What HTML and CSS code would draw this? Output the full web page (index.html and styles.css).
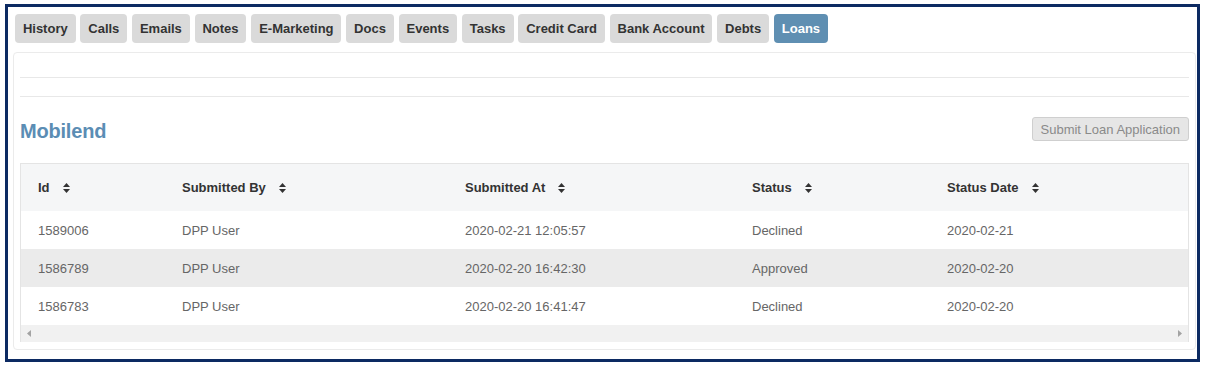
FILE: index.html
```html
<!DOCTYPE html>
<html>
<head>
<meta charset="utf-8">
<link rel="stylesheet" href="styles.css">
</head>
<body>
<div class="frame">
  <nav class="tabs">
    <span class="tab">History</span>
    <span class="tab">Calls</span>
    <span class="tab">Emails</span>
    <span class="tab">Notes</span>
    <span class="tab">E-Marketing</span>
    <span class="tab">Docs</span>
    <span class="tab">Events</span>
    <span class="tab">Tasks</span>
    <span class="tab">Credit Card</span>
    <span class="tab">Bank Account</span>
    <span class="tab">Debts</span>
    <span class="tab active">Loans</span>
  </nav>
  <div class="panel">
    <div class="rule rule-a"></div>
    <div class="rule rule-b"></div>
    <div class="head-row">
      <h2 class="title">Mobilend</h2>
      <button class="submit">Submit Loan Application</button>
    </div>
    <div class="table-wrap">
      <table class="grid">
        <colgroup>
          <col class="c1"><col class="c2"><col class="c3"><col class="c4"><col class="c5">
        </colgroup>
        <thead>
          <tr>
            <th>Id<svg class="sort" viewBox="0 0 7 10"><path d="M3.5 0 L7 4 L0 4 Z M0 6 L7 6 L3.5 10 Z"/></svg></th>
            <th>Submitted By<svg class="sort" viewBox="0 0 7 10"><path d="M3.5 0 L7 4 L0 4 Z M0 6 L7 6 L3.5 10 Z"/></svg></th>
            <th>Submitted At<svg class="sort" viewBox="0 0 7 10"><path d="M3.5 0 L7 4 L0 4 Z M0 6 L7 6 L3.5 10 Z"/></svg></th>
            <th>Status<svg class="sort" viewBox="0 0 7 10"><path d="M3.5 0 L7 4 L0 4 Z M0 6 L7 6 L3.5 10 Z"/></svg></th>
            <th>Status Date<svg class="sort" viewBox="0 0 7 10"><path d="M3.5 0 L7 4 L0 4 Z M0 6 L7 6 L3.5 10 Z"/></svg></th>
          </tr>
        </thead>
        <tbody>
          <tr>
            <td>1589006</td><td>DPP User</td><td>2020-02-21 12:05:57</td><td>Declined</td><td>2020-02-21</td>
          </tr>
          <tr class="alt">
            <td>1586789</td><td>DPP User</td><td>2020-02-20 16:42:30</td><td>Approved</td><td>2020-02-20</td>
          </tr>
          <tr>
            <td>1586783</td><td>DPP User</td><td>2020-02-20 16:41:47</td><td>Declined</td><td>2020-02-20</td>
          </tr>
        </tbody>
      </table>
      <div class="hscroll">
        <svg class="arrow" viewBox="0 0 4 7"><path d="M4 0 L0 3.5 L4 7 Z"/></svg>
        <svg class="arrow" viewBox="0 0 4 7"><path d="M0 0 L4 3.5 L0 7 Z"/></svg>
      </div>
    </div>
  </div>
</div>
</body>
</html>
```
FILE: styles.css
```css
* { box-sizing: border-box; }
html, body { margin: 0; padding: 0; background: #fff; }
body {
  font-family: "Liberation Sans", Arial, sans-serif;
  width: 1206px;
  height: 368px;
  overflow: hidden;
}
.frame {
  margin: 4px 6px 0 5px;
  width: 1195px;
  height: 358px;
  border: 3px solid #0c2a62;
  padding: 7px 1px 0 5px;
}
.tabs {
  display: flex;
  gap: 4.8px;
  margin-left: 2px;
  height: 29px;
}
.tab {
  display: flex;
  align-items: center;
  padding: 0 7.9px;
  height: 29px;
  background: #dadada;
  border-radius: 4px;
  font-size: 13px;
  font-weight: bold;
  color: #333;
}
.tab.active {
  background: #5f8fb2;
  color: #fff;
}
.panel {
  margin-top: 9px;
  height: 298px;
  border: 1px solid #ebebeb;
  border-radius: 4px;
  padding: 0 6px 7px;
}
.rule { border-bottom: 1px solid #e8e8e8; }
.rule-a { height: 25px; }
.rule-b { height: 19px; }
.head-row {
  display: flex;
  justify-content: space-between;
  align-items: flex-end;
  padding: 20px 0 22px;
  height: 66px;
}
.title {
  margin: 0;
  font-size: 20px;
  line-height: 20px;
  font-weight: bold;
  color: #5b8db4;
  letter-spacing: -0.2px;
}
.submit {
  height: 24px;
  padding: 0 8px;
  background: #e6e6e6;
  border: 1px solid #cfcfcf;
  border-radius: 3px;
  font-family: "Liberation Sans", Arial, sans-serif;
  font-size: 13px;
  color: #8a8a8a;
}
.table-wrap {
  border: 1px solid #e4e4e4;
  border-bottom: 0;
}
.grid {
  width: 100%;
  border-collapse: collapse;
  table-layout: fixed;
  font-size: 13px;
}
.c1 { width: 144px; }
.c2 { width: 283px; }
.c3 { width: 287px; }
.c4 { width: 195px; }
.grid th {
  height: 47px;
  background: #f5f6f7;
  text-align: left;
  font-weight: bold;
  color: #333;
  padding: 0 0 1px 17px;
  white-space: nowrap;
}
.sort {
  width: 7px;
  height: 10px;
  margin-left: 13px;
  fill: #333;
  vertical-align: -1px;
}
.grid td {
  height: 38px;
  padding: 0 0 0 17px;
  color: #666;
  white-space: nowrap;
}
.grid tr.alt td { background: #ebebeb; }
.hscroll {
  height: 17px;
  background: #f1f1f1;
  display: flex;
  justify-content: space-between;
  align-items: center;
  padding: 0 6px;
}
.arrow {
  width: 4px;
  height: 7px;
  fill: #a3a3a3;
}
```
